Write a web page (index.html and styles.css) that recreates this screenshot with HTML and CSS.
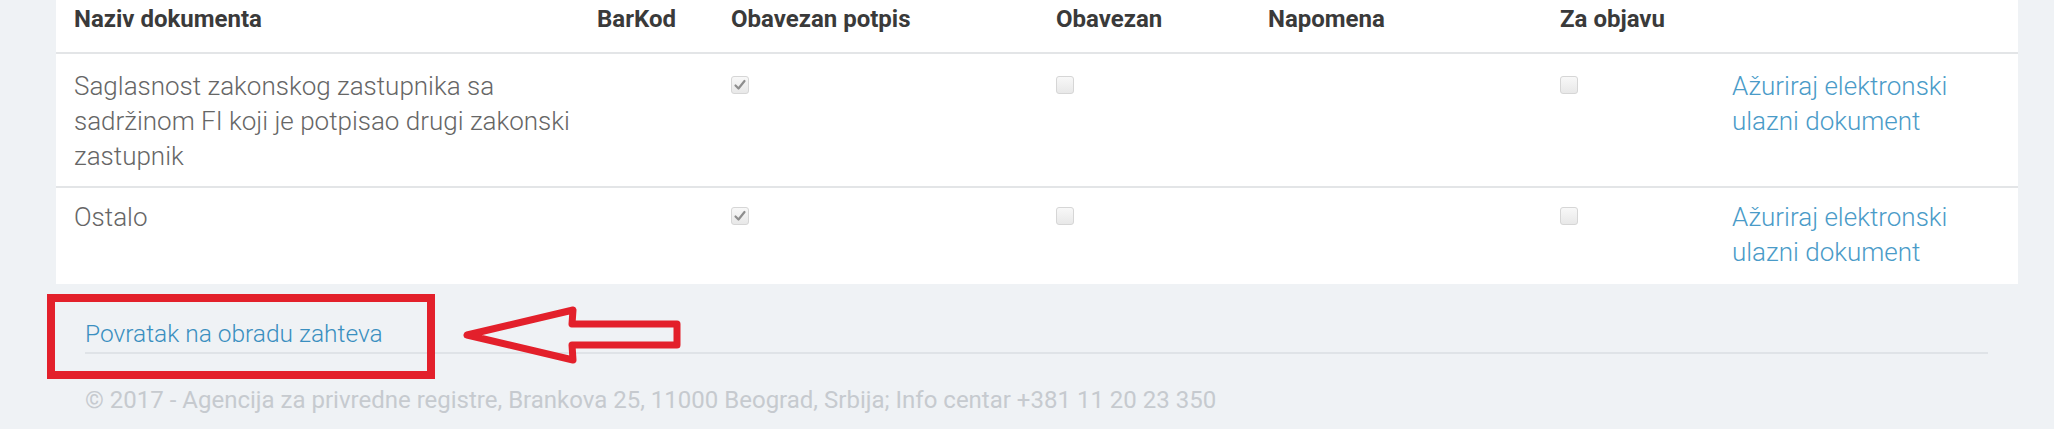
FILE: index.html
```html
<!DOCTYPE html>
<html lang="sr">
<head>
  <meta charset="UTF-8" />
  <title>Ulazni dokumenti</title>
  <link rel="stylesheet" href="styles.css">
</head>
<body>

  <div class="page">
    <div class="panel">
      <table class="docs">
        <colgroup>
          <col class="w-name"><col class="w-bar"><col class="w-sign"><col class="w-req"><col class="w-note"><col class="w-pub"><col class="w-act">
        </colgroup>
        <thead>
          <tr>
            <th class="name">Naziv dokumenta</th>
            <th class="bar">BarKod</th>
            <th>Obavezan potpis</th>
            <th>Obavezan</th>
            <th>Napomena</th>
            <th>Za objavu</th>
            <th></th>
          </tr>
        </thead>
        <tbody>
          <tr>
            <td class="name">Saglasnost zakonskog zastupnika sa sadržinom FI koji je potpisao drugi zakonski zastupnik</td>
            <td class="bar"></td>
            <td><span class="chk"><svg viewBox="0 0 16 16"><path d="M3.5 8.5 L6.5 11.5 L12.5 4" /></svg></span></td>
            <td><span class="chk"></span></td>
            <td></td>
            <td><span class="chk"></span></td>
            <td class="act"><a href="#">Ažuriraj elektronski ulazni dokument</a></td>
          </tr>
          <tr>
            <td class="name">Ostalo</td>
            <td class="bar"></td>
            <td><span class="chk"><svg viewBox="0 0 16 16"><path d="M3.5 8.5 L6.5 11.5 L12.5 4" /></svg></span></td>
            <td><span class="chk"></span></td>
            <td></td>
            <td><span class="chk"></span></td>
            <td class="act"><a href="#">Ažuriraj elektronski ulazni dokument</a></td>
          </tr>
        </tbody>
      </table>
    </div>

    <div class="bottom">
      <div class="back"><a href="#">Povratak na obradu zahteva</a></div>
      <hr>
      <footer>
        <p>&copy; 2017 - Agencija za privredne registre, Brankova 25, 11000 Beograd, Srbija; Info centar +381 11 20 23 350</p>
      </footer>

      <!-- oznaka na slici -->
      <div class="mark-box"></div>
      <svg class="mark-arrow" viewBox="0 0 230 66">
        <polygon points="7,33 113,8 112,22 217,22 217,43 112,43 113,58" />
      </svg>
    </div>
  </div>

</body>
</html>
```

FILE: styles.css
```css
* {
  box-sizing: border-box;
  margin: 0;
  padding: 0;
}

body {
  font-family: Roboto, 'Liberation Sans', sans-serif;
  background: #eff2f5;
  color: #666;
}

.page {
  padding: 0 36px 0 56px;
}

.panel {
  background: #fff;
}

.docs {
  width: 100%;
  border-collapse: collapse;
  table-layout: fixed;
}

.w-name { width: 535px; }
.w-bar { width: 122px; }
.w-sign { width: 325px; }
.w-req { width: 212px; }
.w-note { width: 292px; }
.w-pub { width: 172px; }

.docs th {
  text-align: left;
  font-weight: 700;
  font-size: 24px;
  color: #3a3a3a;
  line-height: 29px;
  padding: 5px 18px 18px;
  border-bottom: 2px solid #e3e5e7;
  white-space: nowrap;
}

.docs td {
  font-weight: 300;
  font-size: 26px;
  line-height: 35px;
  padding: 15px 18px 12px;
  vertical-align: top;
}

.docs .name {
  padding-right: 0;
}

.docs .bar {
  padding-left: 6px;
}

.docs td.act {
  padding-right: 40px;
}

.docs tbody tr:first-child td {
  border-bottom: 2px solid #e3e5e7;
}

.docs tbody tr:last-child td {
  padding-top: 12px;
  padding-bottom: 14px;
}

.docs a {
  color: #4a9bc8;
  text-decoration: none;
}

.chk {
  display: inline-block;
  width: 18px;
  height: 18px;
  margin-top: 7px;
  border: 1px solid #d6d6d6;
  border-radius: 3px;
  background: linear-gradient(#f8f8f8, #e8e8e8);
  vertical-align: top;
}

.chk svg {
  display: block;
  width: 16px;
  height: 16px;
}

.chk path {
  fill: none;
  stroke: #8e8e8e;
  stroke-width: 2.2;
  stroke-linecap: round;
  stroke-linejoin: round;
}

.bottom {
  position: relative;
  padding: 35px 30px 20px 29px;
}

.back {
  font-size: 24.5px;
  font-weight: 300;
  line-height: 30px;
}

.back a {
  color: #3a8fc0;
  text-decoration: none;
}

hr {
  border: none;
  border-top: 2px solid #dfe3e7;
  margin-top: 3px;
}

footer p {
  font-size: 24px;
  line-height: 30px;
  color: #c6cacf;
  margin-top: 31px;
}

.mark-box {
  position: absolute;
  left: -9px;
  top: 10px;
  width: 388px;
  height: 85px;
  border: 8px solid #e3202b;
}

.mark-arrow {
  position: absolute;
  left: 404px;
  top: 18px;
  width: 230px;
  height: 66px;
}

.mark-arrow polygon {
  fill: none;
  stroke: #e3202b;
  stroke-width: 7;
  stroke-linejoin: round;
}
```
